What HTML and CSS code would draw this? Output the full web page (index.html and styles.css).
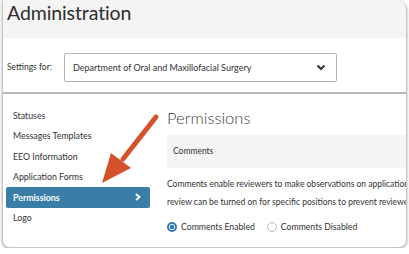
FILE: index.html
```html
<!DOCTYPE html>
<html lang="en">
<head>
    <meta charset="UTF-8">
    <meta name="viewport" content="width=device-width, initial-scale=1.0">
    <title>Administration</title>
    <link rel="stylesheet" href="styles.css">
</head>
<body>
    <div class="card">
        <div class="header">
            <h1>Administration</h1>
        </div>

        <!-- Settings selector -->
        <div class="settings">
            <label>Settings for:</label>
            <div class="select">
                <span>Department of Oral and Maxillofacial Surgery</span>
                <svg class="chevron" width="10" height="7" viewBox="0 0 10 7">
                    <path d="M1.5 1.5 L5 5 L8.5 1.5" fill="none" stroke="#333" stroke-width="2"/>
                </svg>
            </div>
        </div>

        <div class="main">
            <!-- Side navigation -->
            <ul class="nav">
                <li>Statuses</li>
                <li>Messages Templates</li>
                <li>EEO Information</li>
                <li>Application Forms</li>
                <li class="active">Permissions
                    <svg width="6" height="8" viewBox="0 0 6 8">
                        <path d="M1 1 L4.5 4 L1 7" fill="none" stroke="#fff" stroke-width="2"/>
                    </svg>
                </li>
                <li>Logo</li>
            </ul>

            <!-- Permissions content -->
            <div class="content">
                <h2>Permissions</h2>
                <div class="panel-title">Comments</div>
                <p>Comments enable reviewers to make observations on applications and share them with others. Blind<br>review can be turned on for specific positions to prevent reviewers from seeing each other's comments.</p>
                <div class="radios">
                    <label class="radio"><span class="dot checked"></span>Comments Enabled</label>
                    <label class="radio"><span class="dot"></span>Comments Disabled</label>
                </div>
            </div>
        </div>

        <svg class="arrow" width="70" height="80" viewBox="0 0 70 80">
            <line x1="57" y1="4" x2="24" y2="46" stroke="#d4522b" stroke-width="5" stroke-linecap="round"/>
            <polygon points="3,70 12,40 32,55" fill="#d4522b"/>
        </svg>
    </div>
</body>
</html>
```

FILE: styles.css
```css
* {
    box-sizing: border-box;
    margin: 0;
    padding: 0;
}

body {
    font-family: Lato, "Open Sans", sans-serif;
    background-color: #fff;
    color: #333;
    overflow: hidden;
}

.card {
    position: relative;
    width: 405px;
    height: 248px;
    margin-left: 2px;
    border: 1px solid #c8c8c8;
    border-top: none;
    border-radius: 0 10px 8px 8px;
    box-shadow: 0 1px 3px rgba(0, 0, 0, 0.35);
    overflow: hidden;
    background-color: #fff;
}

.header {
    height: 38px;
    background-color: #f4f4f4;
    padding: 1px 0 0 4px;
}

h1 {
    font-size: 19.5px;
    font-weight: 400;
    letter-spacing: -0.1px;
    color: #2e2e2e;
}

.settings {
    display: flex;
    align-items: center;
    height: 56px;
    padding: 4px 0 0 4px;
    border-bottom: 2px solid #b8b8b8;
}

.settings label {
    font-size: 8.5px;
    width: 57px;
}

.select {
    display: flex;
    align-items: center;
    justify-content: space-between;
    width: 273px;
    height: 29px;
    padding: 0 10px 0 8px;
    border: 1px solid #b5b5b5;
    border-radius: 2px;
    font-size: 9px;
}

.main {
    display: flex;
}

.nav {
    list-style: none;
    flex-shrink: 0;
    width: 144px;
    margin: 11px 0 0 3px;
}

.nav li {
    display: flex;
    align-items: center;
    justify-content: space-between;
    height: 20.5px;
    padding: 0 9px 0 7px;
    font-size: 8.8px;
}

.nav li.active {
    background-color: #3a7da6;
    color: #fff;
    font-weight: 700;
    border-radius: 2px;
}

.content {
    flex: 1;
    margin: 14px 0 0 17px;
    white-space: nowrap;
}

h2 {
    font-size: 16.5px;
    font-weight: 300;
    color: #444;
    margin-bottom: 7px;
}

.panel-title {
    background-color: #f4f4f4;
    height: 33px;
    line-height: 33px;
    padding-left: 6px;
    font-size: 8.5px;
}

.content p {
    font-size: 8.5px;
    line-height: 18px;
    margin-top: 7px;
}

.radios {
    display: flex;
    gap: 12px;
    margin-top: 10px;
    font-size: 8.7px;
}

.radio {
    display: flex;
    align-items: center;
    gap: 4px;
}

.dot {
    width: 10px;
    height: 10px;
    border: 1px solid #bbb;
    border-radius: 50%;
}

.dot.checked {
    border: 2px solid #2f7ab0;
    background: radial-gradient(circle, #2f7ab0 2px, #fff 2.5px);
}

.arrow {
    position: absolute;
    left: 96px;
    top: 113px;
}
```
